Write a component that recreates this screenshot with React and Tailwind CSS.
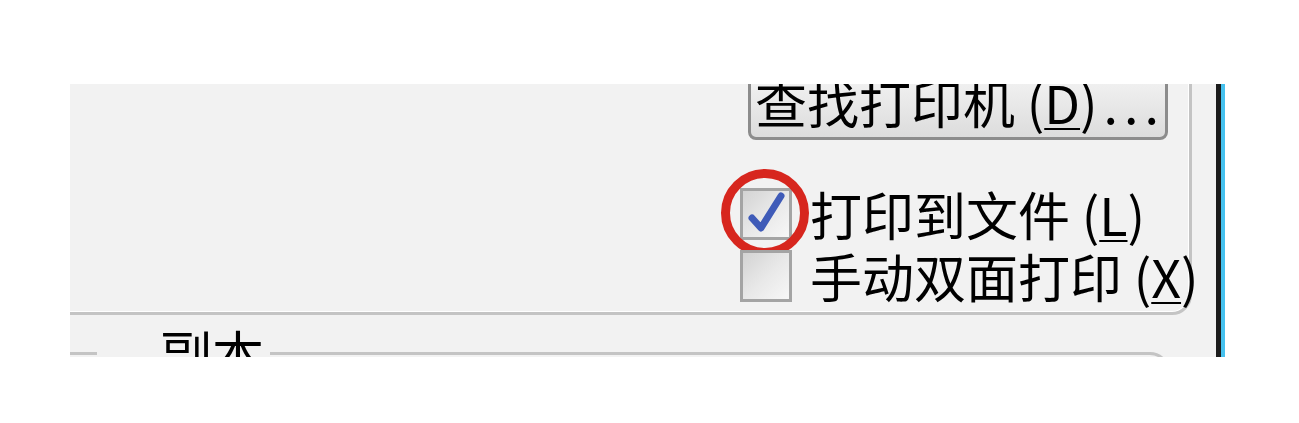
import React from "react";

const cjk = { fontFamily: '"Noto Sans CJK SC", "Noto Sans", sans-serif' };

function Checkbox({ checked }) {
  return (
    <div className="w-[52px] h-[52px] shrink-0 border-[3px] border-[#a4a4a4] bg-gradient-to-br from-[#d3d3d3] via-[#e8e8e8] to-[#f7f7f7]">
      {checked && (
        <svg viewBox="0 0 46 46" className="w-full h-full">
          <path d="M9 27 L18 37 L38 5" fill="none" stroke="#3f5bb8" strokeWidth="7" strokeLinecap="round" strokeLinejoin="round" />
        </svg>
      )}
    </div>
  );
}

function Option({ label, hotkey, checked, circled }) {
  return (
    <div className="flex items-center gap-[18px] h-[52px]">
      <div className="relative">
        <Checkbox checked={checked} />
        {circled && (
          <div className="absolute -left-[19px] -top-[19px] w-[88px] h-[88px] rounded-full border-[9px] border-[#d7261e]" />
        )}
      </div>
      <span className="text-[52px] leading-none text-black whitespace-nowrap">
        {label} (<span className="underline decoration-2 underline-offset-4">{hotkey}</span>)
      </span>
    </div>
  );
}

export default function App() {
  return (
    <div className="w-[1299px] h-[423px] bg-white overflow-hidden" style={cjk}>
      <div className="ml-[70px] mt-[84px] flex h-[273px]">
        <div className="w-[1146px] h-full bg-[#f2f2f2] overflow-hidden">
          <div className="-ml-[20px] -mt-[60px] w-[1142px] h-[291px] rounded-[20px] border-[3px] border-[#c4c4c4] shadow-[inset_0_0_0_1px_#ffffff] pl-[687px] pt-[43px] flex flex-col">
            <div className="ml-[8px] w-[420px] h-[70px] rounded-[8px] border-[3px] border-[#8c8c8c] bg-gradient-to-b from-[#f4f4f4] to-[#dcdcdc] flex items-center pl-[4px] overflow-hidden">
              <span className="text-[52px] leading-none text-black whitespace-nowrap -mt-[6px]">
                查找打印机 (<span className="underline decoration-2 underline-offset-4">D</span>)<span className="tracking-[6px] ml-[6px]">...</span>
              </span>
            </div>
            <div className="mt-[48px] flex flex-col gap-[10px]">
              <Option label="打印到文件" hotkey="L" checked circled />
              <Option label="手动双面打印" hotkey="X" />
            </div>
          </div>
          <fieldset className="-ml-[20px] mt-[12px] w-[1120px] h-[120px] rounded-[20px] border-[3px] border-[#c4c4c4]">
            <legend className="ml-[44px] pl-[63px] pr-[6px] text-[52px] leading-none text-black">副本</legend>
          </fieldset>
        </div>
        <div className="w-[5px] h-full bg-[#1c1c1c]" />
        <div className="w-[4px] h-full bg-[#46c1ee]" />
      </div>
    </div>
  );
}
